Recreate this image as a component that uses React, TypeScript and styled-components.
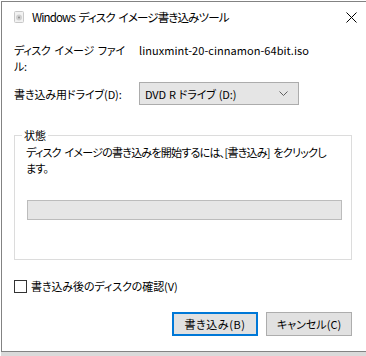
import styled, { createGlobalStyle } from "styled-components";

const Global = createGlobalStyle`
  html, body {
    margin: 0;
    padding: 0;
    background: #ffffff;
  }
  body {
    width: 366px;
    height: 356px;
    overflow: hidden;
    font-family: "Noto Sans CJK JP", "Noto Sans", sans-serif;
    font-size: 11px;
    letter-spacing: -0.1px;
    word-spacing: 2px;
    color: #000;
    font-feature-settings: "palt";
  }
`;

const Window = styled.div`
  box-sizing: border-box;
  margin: 1px 0 0 1px;
  width: 365px;
  height: 351px;
  background: #fff;
  border: 1px solid #838383;
  border-right: none;
  box-shadow: 0 4px 0 #dadada;
  display: flex;
  flex-direction: column;
`;

const TitleBar = styled.div`
  height: 30px;
  display: flex;
  align-items: center;
  padding: 0 9px 0 12px;
  gap: 8px;
`;

const Title = styled.span`
  flex: 1;
  font-size: 11.5px;
  letter-spacing: -0.85px;
  line-height: 16px;
  white-space: nowrap;
`;

const Body = styled.div`
  padding: 0 14px 0 12px;
  line-height: 16px;
`;

const Row = styled.div<{ top: number }>`
  display: grid;
  grid-template-columns: 125px 1fr;
  align-items: center;
  margin-top: ${(p) => p.top}px;
`;

const FileRow = styled(Row)`
  align-items: start;
`;

const FileLabel = styled.span`
  letter-spacing: -0.35px;
`;

const FileName = styled.span`
  letter-spacing: 0.05px;
`;

const Select = styled.div`
  box-sizing: border-box;
  width: 160px;
  height: 23px;
  background: #e5e5e5;
  border: 1px solid #acacac;
  display: flex;
  align-items: center;
  justify-content: space-between;
  padding: 0 10px 0 5px;
  word-spacing: 0.5px;
`;

const Group = styled.fieldset`
  margin: 22px 0 0;
  padding: 1px 9px 39px 11px;
  border: 1px solid #dcdcdc;
  min-width: 0;
`;

const Legend = styled.legend`
  padding: 0 2px;
  margin-left: -4px;
  line-height: 16px;
`;

const Message = styled.div`
  letter-spacing: -0.75px;
  margin-right: -8px;
  white-space: nowrap;
`;

const Progress = styled.div`
  box-sizing: border-box;
  margin: 24px 0 0 1px;
  height: 20px;
  background: #e6e6e6;
  border: 1px solid #bcbcbc;
`;

const CheckRow = styled.label`
  display: flex;
  align-items: center;
  gap: 4px;
  margin-top: 18px;
  height: 16px;
`;

const Box = styled.span`
  box-sizing: border-box;
  width: 13px;
  height: 13px;
  border: 1px solid #333;
  background: #fff;
`;

const Buttons = styled.div`
  display: flex;
  justify-content: flex-end;
  gap: 8px;
  margin-top: 18px;
`;

const Button = styled.button<{ primary?: boolean }>`
  box-sizing: border-box;
  width: 86px;
  height: 24px;
  padding: 0;
  font: inherit;
  letter-spacing: ${(p) => (p.primary ? "0.6px" : "0")};
  font-feature-settings: "palt";
  color: #000;
  background: #e1e1e1;
  border: ${(p) => (p.primary ? "2px solid #0078d7" : "1px solid #adadad")};
`;

const DiscIcon = () => (
  <svg width="10" height="12" viewBox="0 0 10 12">
    <rect x="0.5" y="0.5" width="9" height="11" rx="1" fill="#f2f2f2" stroke="#c8c8c8" />
    <circle cx="5" cy="6.5" r="3" fill="#d0d0d0" />
    <circle cx="5" cy="6.5" r="0.9" fill="#8a8a8a" />
  </svg>
);

const CloseIcon = () => (
  <svg width="11" height="11" viewBox="0 0 11 11">
    <path d="M0.5 0.5 L10.5 10.5 M10.5 0.5 L0.5 10.5" stroke="#000" strokeWidth="1" />
  </svg>
);

const Chevron = () => (
  <svg width="9" height="5" viewBox="0 0 9 5">
    <path d="M0.5 0.5 L4.5 4.5 L8.5 0.5" fill="none" stroke="#606060" strokeWidth="1" />
  </svg>
);

export default function App() {
  return (
    <>
      <Global />
      <Window>
        <TitleBar>
          <DiscIcon />
          <Title>Windows ディスク イメージ書き込みツール</Title>
          <CloseIcon />
        </TitleBar>
        <Body>
          <FileRow top={10}>
            <FileLabel>
              ディスク イメージ ファイ
              <br />
              ル:
            </FileLabel>
            <FileName>linuxmint-20-cinnamon-64bit.iso</FileName>
          </FileRow>
          <Row top={8}>
            <span>書き込み用ドライブ(D):</span>
            <Select>
              <span>DVD R ドライブ (D:)</span>
              <Chevron />
            </Select>
          </Row>
          <Group>
            <Legend>状態</Legend>
            <Message>
              ディスク イメージの書き込みを開始するには、[書き込み] をクリックし
              <br />
              ます。
            </Message>
            <Progress />
          </Group>
          <CheckRow>
            <Box />
            <span>書き込み後のディスクの確認(V)</span>
          </CheckRow>
          <Buttons>
            <Button primary>書き込み(B)</Button>
            <Button>キャンセル(C)</Button>
          </Buttons>
        </Body>
      </Window>
    </>
  );
}
